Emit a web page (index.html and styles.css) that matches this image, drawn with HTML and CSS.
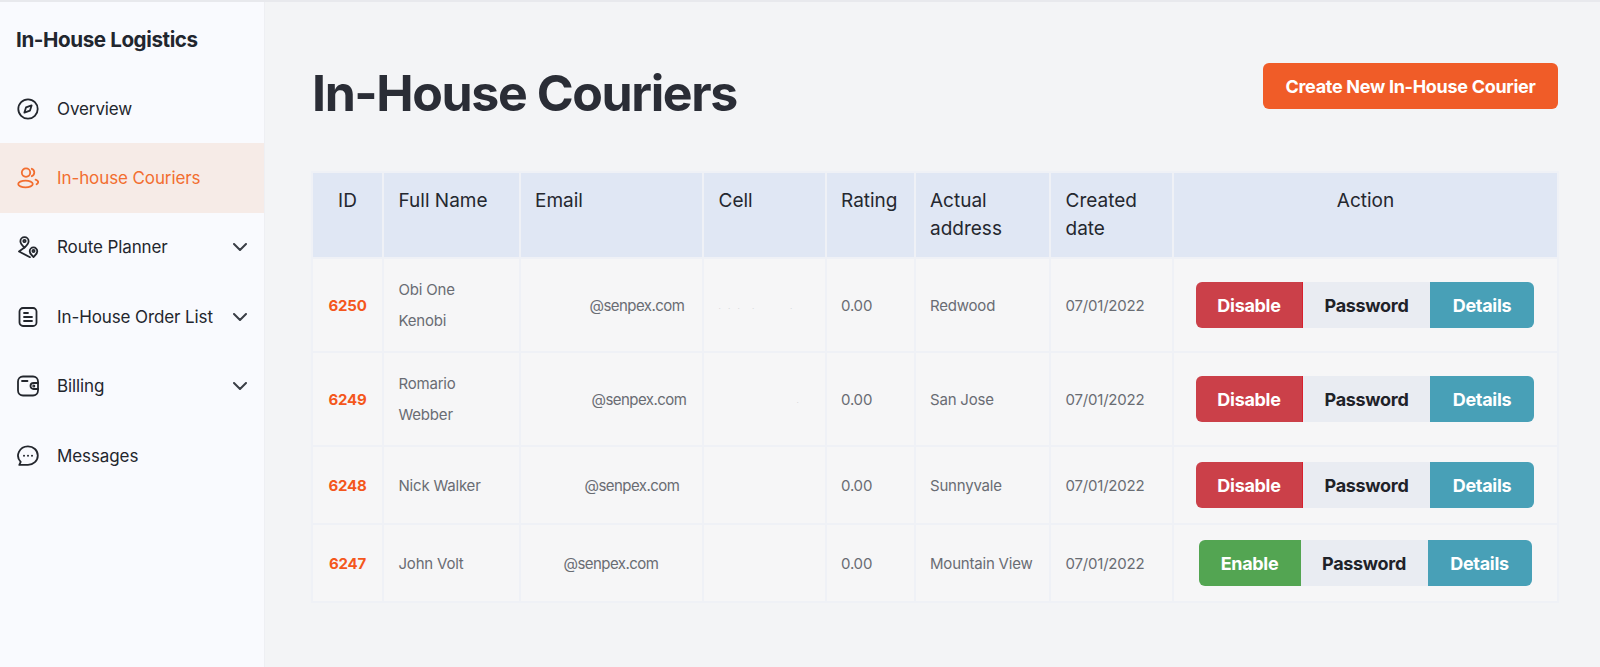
FILE: index.html
```html
<!DOCTYPE html>
<html lang="en">
<head>
  <meta charset="UTF-8" />
  <meta name="viewport" content="width=device-width, initial-scale=1.0"/>
  <title>In-House Couriers</title>
  <link rel="stylesheet" href="styles.css">
</head>
<body>
  <div class="top-line"></div>
  <div class="app-wrap">
    <aside class="sidebar">
      <div class="brand">In-House Logistics</div>
      <nav>
        <a class="nav-item">
          <svg class="nav-icon" viewBox="0 0 22 22"><circle cx="11" cy="11" r="9.7"/><path d="M14.6 7.4 13 12.6 7.4 14.6 9 9.4Z"/></svg>
          <span>Overview</span>
        </a>
        <a class="nav-item active">
          <svg class="nav-icon" viewBox="0 0 22 22"><circle cx="9" cy="5.6" r="4.2"/><ellipse cx="8.5" cy="17" rx="7.3" ry="3.4"/><path d="M14.8 1.8a4 4 0 0 1 0 7.4M18.6 12.6c1.6.6 2.6 1.5 2.6 2.5 0 .8-.6 1.5-1.6 2.1"/></svg>
          <span>In-house Couriers</span>
        </a>
        <a class="nav-item">
          <svg class="nav-icon" viewBox="0 0 22 22"><path d="M7.500 11.500C5 9.300 3.400 7.300 3.400 5.200a4.100 4.100 0 0 1 8.200 0c0 2.100-1.600 4.100-4.100 6.300Z"/><circle cx="7.500" cy="5" r="1.200"/><path d="M16.500 21c-2.200-2-3.800-3.800-3.800-5.800a3.800 3.800 0 0 1 7.600 0c0 2-1.600 3.800-3.800 5.800Z"/><circle cx="16.500" cy="15" r="1.100"/><path d="M7.500 11.500 2 15.500 13 21.200"/></svg>
          <span>Route Planner</span>
          <svg class="chevron" viewBox="0 0 14 8"><path d="M1 1l6 6 6-6"/></svg>
        </a>
        <a class="nav-item">
          <svg class="nav-icon" viewBox="0 0 22 22"><rect x="2.500" y="2" width="17" height="18" rx="3.500"/><path d="M7 7h4M7 11h8M7 15h8"/></svg>
          <span>In-House Order List</span>
          <svg class="chevron" viewBox="0 0 14 8"><path d="M1 1l6 6 6-6"/></svg>
        </a>
        <a class="nav-item">
          <svg class="nav-icon" viewBox="0 0 22 22"><rect x="1" y="1.500" width="20" height="19" rx="5"/><path d="M5 6h5.500M21 8h-4.500a3 3 0 0 0 0 6H21"/><circle cx="16.800" cy="11" r=".6"/></svg>
          <span>Billing</span>
          <svg class="chevron" viewBox="0 0 14 8"><path d="M1 1l6 6 6-6"/></svg>
        </a>
        <a class="nav-item">
          <svg class="nav-icon" viewBox="0 0 22 22"><path d="M11 1.300a9.800 9.300 0 0 1 0 18.600H2.300l1.400-3A9.800 9.300 0 0 1 11 1.300Z"/><path class="dots" d="M7 10.800h.01M11 10.800h.01M15 10.800h.01"/></svg>
          <span>Messages</span>
        </a>
      </nav>
    </aside>

    <main class="content">
      <header class="page-head">
        <h1>In-House Couriers</h1>
        <button class="create-btn">Create New In-House Courier</button>
      </header>

      <table class="couriers">
        <colgroup>
          <col class="c-id"><col class="c-name"><col class="c-email"><col class="c-cell">
          <col class="c-rating"><col class="c-address"><col class="c-date"><col class="c-action">
        </colgroup>
        <thead>
          <tr>
            <th class="center">ID</th>
            <th>Full Name</th>
            <th>Email</th>
            <th>Cell</th>
            <th>Rating</th>
            <th>Actual address</th>
            <th>Created date</th>
            <th class="center">Action</th>
          </tr>
        </thead>
        <tbody>
          <tr>
            <td class="center id">6250</td>
            <td class="wrap">Obi One Kenobi</td>
            <td class="email pad-1">@senpex.com</td>
            <td><span class="specks specks-1">. . .  .       .</span></td>
            <td>0.00</td>
            <td>Redwood</td>
            <td>07/01/2022</td>
            <td>
              <div class="btn-group">
                <button class="btn disable">Disable</button><button class="btn password">Password</button><button class="btn details">Details</button>
              </div>
            </td>
          </tr>
          <tr>
            <td class="center id">6249</td>
            <td class="wrap">Romario Webber</td>
            <td class="email pad-2">@senpex.com</td>
            <td><span class="specks specks-2">.</span></td>
            <td>0.00</td>
            <td>San Jose</td>
            <td>07/01/2022</td>
            <td>
              <div class="btn-group">
                <button class="btn disable">Disable</button><button class="btn password">Password</button><button class="btn details">Details</button>
              </div>
            </td>
          </tr>
          <tr>
            <td class="center id">6248</td>
            <td>Nick Walker</td>
            <td class="email pad-3">@senpex.com</td>
            <td></td>
            <td>0.00</td>
            <td>Sunnyvale</td>
            <td>07/01/2022</td>
            <td>
              <div class="btn-group">
                <button class="btn disable">Disable</button><button class="btn password">Password</button><button class="btn details">Details</button>
              </div>
            </td>
          </tr>
          <tr>
            <td class="center id">6247</td>
            <td>John Volt</td>
            <td class="email pad-4">@senpex.com</td>
            <td></td>
            <td>0.00</td>
            <td>Mountain View</td>
            <td>07/01/2022</td>
            <td>
              <div class="btn-group">
                <button class="btn enable">Enable</button><button class="btn password">Password</button><button class="btn details">Details</button>
              </div>
            </td>
          </tr>
        </tbody>
      </table>
    </main>
  </div>
</body>
</html>
```

FILE: styles.css
```css
* {
  margin: 0;
  padding: 0;
  box-sizing: border-box;
}

body {
  font-family: Inter, "Open Sans", sans-serif;
  background: #f3f4f6;
  color: #22252c;
  height: 100vh;
  overflow: hidden;
}

.top-line {
  height: 2px;
  background: #e8e9ed;
}

.app-wrap {
  display: flex;
  height: calc(100vh - 2px);
}

/* sidebar */
.sidebar {
  width: 265px;
  flex-shrink: 0;
  background: #f9fafe;
  border-right: 1px solid #eeeff3;
}

.brand {
  height: 72px;
  padding: 25px 16px 0;
  font-size: 20.6px;
  font-weight: 700;
  letter-spacing: -0.4px;
  color: #22262e;
}

.nav-item {
  display: flex;
  align-items: center;
  gap: 18px;
  height: 69.4px;
  padding: 0 17px;
  font-size: 17px;
  letter-spacing: -0.1px;
  color: #23262d;
}

.nav-item.active {
  background: #f6ebe7;
  color: #f26e30;
}

.nav-icon {
  width: 22px;
  height: 22px;
  flex-shrink: 0;
  fill: none;
  stroke: currentColor;
  stroke-width: 1.8;
  stroke-linecap: round;
  stroke-linejoin: round;
}

.nav-icon .dots {
  stroke-width: 2;
}

.chevron {
  width: 14px;
  height: 8px;
  margin-left: auto;
  fill: none;
  stroke: #3a3e46;
  stroke-width: 2;
  stroke-linecap: round;
  stroke-linejoin: round;
}

/* main area */
.content {
  flex: 1;
  min-width: 0;
  padding: 61px 42px 0 47px;
}

.page-head {
  display: flex;
  justify-content: space-between;
  align-items: flex-start;
  height: 108px;
}

h1 {
  font-size: 50px;
  font-weight: 700;
  line-height: 60px;
  letter-spacing: -1.4px;
  color: #2a2d36;
}

.create-btn {
  width: 295px;
  height: 46px;
  border: none;
  border-radius: 6px;
  background: #f05c28;
  color: #fff;
  font-family: inherit;
  font-size: 18px;
  font-weight: 700;
  letter-spacing: -0.3px;
}

/* table */
.couriers {
  width: calc(100% + 2px);
  margin-left: -1px;
  table-layout: fixed;
  border-collapse: collapse;
  background: #f6f6f7;
}

.c-id { width: 71px; }
.c-name { width: 136.5px; }
.c-email { width: 183.5px; }
.c-cell { width: 122.5px; }
.c-rating { width: 89px; }
.c-address { width: 135.5px; }
.c-date { width: 123px; }

.couriers th,
.couriers td {
  border: 2px solid #eff1f6;
  padding: 15px 14.5px;
  text-align: left;
}

.couriers th {
  height: 84px;
  padding-top: 14px;
  padding-bottom: 14px;
  background: #e0e7f4;
  vertical-align: top;
  font-size: 19px;
  font-weight: 400;
  line-height: 28px;
  color: #25282f;
}

.couriers td {
  font-size: 15px;
  line-height: 31px;
  letter-spacing: -0.2px;
  color: #696c73;
  white-space: nowrap;
}

.couriers td.wrap {
  white-space: normal;
}

.couriers .center {
  text-align: center;
}

.couriers .id {
  font-weight: 700;
  color: #f4571c;
}

.couriers .email {
  letter-spacing: -0.55px;
}

.couriers .pad-1 { padding-left: 69px; }
.couriers .pad-2 { padding-left: 71px; }
.couriers .pad-3 { padding-left: 64px; }
.couriers .pad-4 { padding-left: 43px; }

.specks {
  white-space: pre;
  font-size: 8px;
  color: #d5d6d9;
}

.specks-1 {
  letter-spacing: 2.5px;
}

.specks-2 {
  padding-left: 78px;
}

/* action buttons */
.btn-group {
  display: flex;
  justify-content: center;
  margin-left: -1px;
}

.btn {
  height: 46px;
  border: none;
  font-family: inherit;
  font-size: 18px;
  font-weight: 700;
  letter-spacing: -0.3px;
  color: #fff;
}

.btn:first-child {
  border-radius: 6px 0 0 6px;
}

.btn:last-child {
  border-radius: 0 6px 6px 0;
}

.disable {
  width: 107px;
  background: #cb4049;
  border-right: 1px solid #d8202e;
}

.enable {
  width: 102px;
  background: #53a552;
}

.password {
  width: 127px;
  background: #e9ecf2;
  color: #1f2229;
}

.details {
  width: 104px;
  background: #48a0b7;
}
```
